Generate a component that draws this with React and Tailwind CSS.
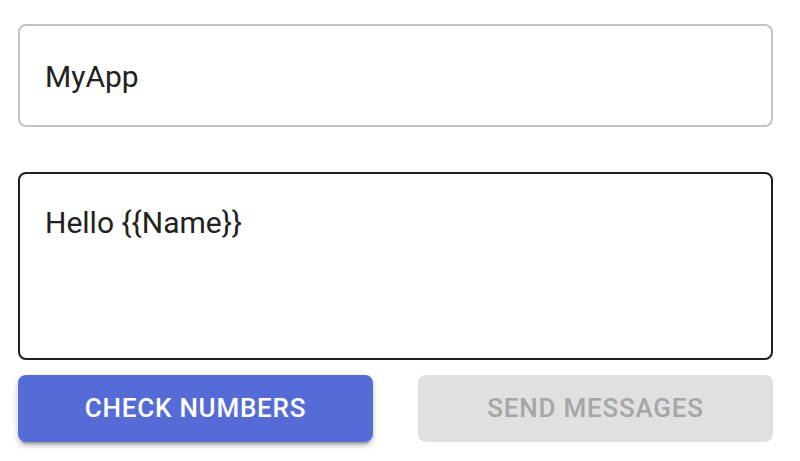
import React, { useState } from 'react';

const font = { fontFamily: 'Roboto, "Liberation Sans", sans-serif' };

export default function App() {
  const [appName, setAppName] = useState('MyApp');
  const [message, setMessage] = useState('Hello {{Name}}');

  return (
    <div className="bg-white w-[800px] h-[461px] pt-[24px] pl-[18px]" style={font}>
      <div className="w-[755px] flex flex-col">
        {/* app name */}
        <input
          type="text"
          value={appName}
          onChange={(e) => setAppName(e.target.value)}
          className="h-[103px] rounded-[8px] border-2 border-[#c4c4c4] pl-[25px] pr-[26px] pt-[2px] text-[30px] leading-[46px] text-[#212121] outline-none bg-white"
        />

        {/* message template */}
        <textarea
          value={message}
          onChange={(e) => setMessage(e.target.value)}
          className="mt-[45px] h-[188px] rounded-[8px] border-2 border-[#1f1f1f] pl-[25px] pr-[26px] pt-[26px] text-[30px] leading-[46px] text-[#212121] outline-none resize-none bg-white"
        />

        <div className="grid grid-cols-2 gap-[45px] mt-[15px]">
          <button className="h-[67px] rounded-[8px] bg-[#556cd6] text-white text-[26px] font-medium uppercase tracking-[0.03em] shadow-[0_6px_2px_-4px_rgba(0,0,0,0.2),0_4px_4px_0_rgba(0,0,0,0.14),0_2px_10px_0_rgba(0,0,0,0.12)]">
            Check Numbers
          </button>
          <button
            disabled
            className="h-[67px] rounded-[8px] bg-[#e0e0e0] text-[#a6a6a6] text-[26px] font-medium uppercase tracking-[0.03em]"
          >
            Send Messages
          </button>
        </div>
      </div>
    </div>
  );
}
